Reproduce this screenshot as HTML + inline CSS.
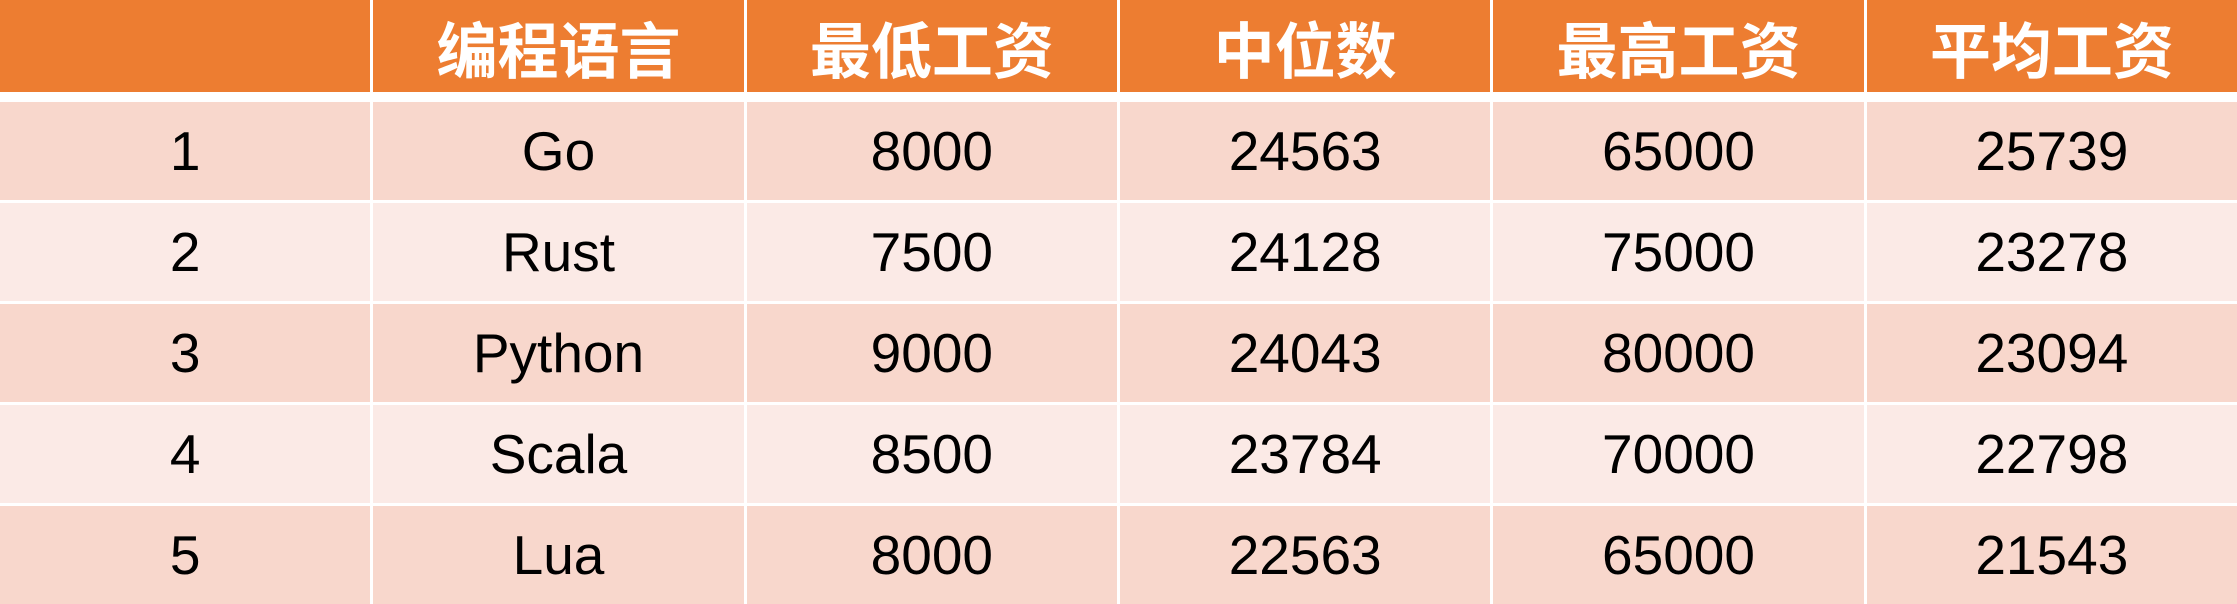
<!DOCTYPE html>
<html><head><meta charset="utf-8"><style>
html,body{margin:0;padding:0;background:#fff;width:2237px;height:604px;overflow:hidden}
.g{display:grid;grid-template-columns:repeat(6,1fr);column-gap:3px;width:2237px}
.c{display:flex;align-items:center;justify-content:center;font-family:"Liberation Sans","Noto Sans CJK SC",sans-serif;font-size:55px;color:#000}
.h{background:#ED7D31;height:92px;color:#fff;font-weight:bold;font-size:61px;font-family:"Noto Sans CJK SC",sans-serif}
.r{height:98px;margin-top:3px}
.o{background:#F8D7CC}.e{background:#FBEAE6}
.first{margin-top:10px}
</style></head><body>
<div class="g">
<div class="c h"></div><div class="c h">编程语言</div><div class="c h">最低工资</div><div class="c h">中位数</div><div class="c h">最高工资</div><div class="c h">平均工资</div>
<div class="c r o first">1</div><div class="c r o first">Go</div><div class="c r o first">8000</div><div class="c r o first">24563</div><div class="c r o first">65000</div><div class="c r o first">25739</div>
<div class="c r e">2</div><div class="c r e">Rust</div><div class="c r e">7500</div><div class="c r e">24128</div><div class="c r e">75000</div><div class="c r e">23278</div>
<div class="c r o">3</div><div class="c r o">Python</div><div class="c r o">9000</div><div class="c r o">24043</div><div class="c r o">80000</div><div class="c r o">23094</div>
<div class="c r e">4</div><div class="c r e">Scala</div><div class="c r e">8500</div><div class="c r e">23784</div><div class="c r e">70000</div><div class="c r e">22798</div>
<div class="c r o">5</div><div class="c r o">Lua</div><div class="c r o">8000</div><div class="c r o">22563</div><div class="c r o">65000</div><div class="c r o">21543</div>
</div>
</body></html>
